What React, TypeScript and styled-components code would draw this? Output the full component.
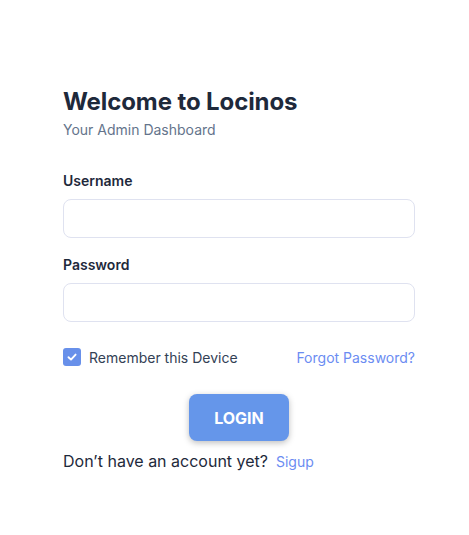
import React, { useState } from "react";
import styled, { createGlobalStyle } from "styled-components";

const GlobalStyle = createGlobalStyle`
  body {
    margin: 0;
    background: #ffffff;
    font-family: Inter, "Noto Sans", sans-serif;
  }
`;

export default function App() {
  const [remember, setRemember] = useState(true);

  return (
    <>
      <GlobalStyle />
      <Page>
        <Form onSubmit={(e) => e.preventDefault()}>
          <Title>Welcome to Locinos</Title>
          <Subtitle>Your Admin Dashboard</Subtitle>

          <Field>
            <Label>Username</Label>
            <Input type="text" />
          </Field>

          <Field>
            <Label>Password</Label>
            <Input type="password" />
          </Field>

          <OptionsRow>
            <CheckLabel>
              <Check
                $checked={remember}
                onClick={() => setRemember(!remember)}
              >
                {remember && (
                  <svg width="12" height="12" viewBox="0 0 12 12">
                    <path
                      d="M2.5 6.2 L5 8.6 L9.6 3.6"
                      fill="none"
                      stroke="#fff"
                      strokeWidth="1.9"
                      strokeLinecap="round"
                      strokeLinejoin="round"
                    />
                  </svg>
                )}
              </Check>
              Remember this Device
            </CheckLabel>
            <LinkText href="#">Forgot Password?</LinkText>
          </OptionsRow>

          <ButtonRow>
            <LoginButton type="submit">LOGIN</LoginButton>
          </ButtonRow>

          <SignupRow>
            Don’t have an account yet?
            <SmallLink href="#">Sigup</SmallLink>
          </SignupRow>
        </Form>
      </Page>
    </>
  );
}

const Page = styled.div`
  width: 469px;
  height: 535px;
  padding: 87px 54px 0 63px;
  box-sizing: border-box;
`;

const Form = styled.form`
  display: flex;
  flex-direction: column;
  width: 352px;
`;

const Title = styled.h1`
  margin: 0;
  font-size: 24px;
  line-height: 30px;
  font-weight: 700;
  color: #1e293b;
  letter-spacing: -0.1px;
`;

const Subtitle = styled.div`
  margin-top: 4px;
  font-size: 14px;
  line-height: 18px;
  color: #64748b;
`;

const Field = styled.div`
  display: flex;
  flex-direction: column;
  margin-top: 33px;

  & + & {
    margin-top: 18px;
  }
`;

const Label = styled.label`
  font-size: 14px;
  line-height: 18px;
  font-weight: 600;
  color: #1e293b;
  margin-bottom: 9px;
`;

const Input = styled.input`
  height: 39px;
  box-sizing: border-box;
  border: 1px solid #dfe2f0;
  border-radius: 8px;
  padding: 0 12px;
  font-size: 14px;
  outline: none;
`;

const OptionsRow = styled.div`
  display: flex;
  align-items: center;
  justify-content: space-between;
  margin-top: 26px;
`;

const CheckLabel = styled.label`
  display: flex;
  align-items: center;
  gap: 8px;
  font-size: 14px;
  color: #334155;
`;

const Check = styled.span<{ $checked: boolean }>`
  width: 18px;
  height: 18px;
  border-radius: 3px;
  display: flex;
  align-items: center;
  justify-content: center;
  box-sizing: border-box;
  background: ${(p) => (p.$checked ? "#6890ea" : "#fff")};
  border: ${(p) => (p.$checked ? "none" : "1px solid #cbd5e1")};
  cursor: pointer;
`;

const LinkText = styled.a`
  font-size: 14px;
  color: #6b8cf2;
  text-decoration: none;
`;

const ButtonRow = styled.div`
  display: flex;
  justify-content: center;
  margin-top: 28px;
`;

const LoginButton = styled.button`
  width: 100px;
  height: 47px;
  border: none;
  border-radius: 8px;
  background: #6596ea;
  color: #ffffff;
  font-family: inherit;
  font-size: 16px;
  font-weight: 700;
  box-shadow: 0 2px 6px rgba(0, 0, 0, 0.25);
  cursor: pointer;
`;

const SignupRow = styled.div`
  display: flex;
  align-items: baseline;
  gap: 8px;
  margin-top: 10px;
  font-size: 16px;
  color: #1e293b;
`;

const SmallLink = styled.a`
  font-size: 14px;
  color: #6b8cf2;
  text-decoration: none;
`;
